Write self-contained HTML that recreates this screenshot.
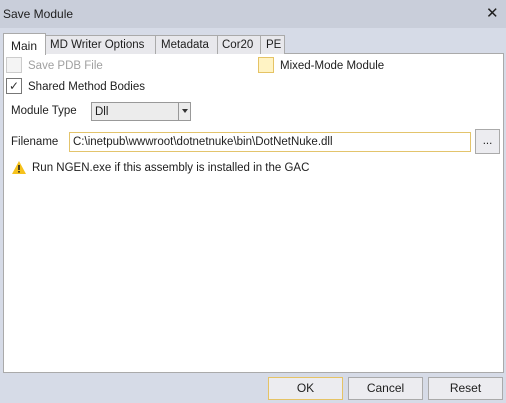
<!DOCTYPE html>
<html><head><style>
*{box-sizing:border-box;margin:0;padding:0}
body{width:506px;height:403px;background:#d6dbe7;font-family:"Liberation Sans",sans-serif;font-size:11.5px;color:#1e1e1e;position:relative;overflow:hidden}
.a{position:absolute}
.title{left:0;top:0;width:506px;height:28px;background:#c9ceda}
.tab{position:absolute;top:35px;height:19px;border:1px solid #aaa;border-bottom:none;background:#e8e8ec;padding:3px 0 0 5px;font-size:11.5px;white-space:nowrap}
.panel{left:3px;top:53px;width:501px;height:320px;background:#fff;border:1px solid #aaa}
.cb{position:absolute;width:16px;height:16px;border:1px solid #777;background:#fff}
.btn{position:absolute;top:377px;height:23px;width:75px;border:1px solid #aaa;background:#ececf0;text-align:center;line-height:21px;font-size:12px}
</style></head><body>
<div class="a title"></div>
<div class="a" style="left:3px;top:7px;font-size:12px">Save Module</div>
<div class="a" style="left:486px;top:4px;font-size:15px">✕</div>
<div class="a panel"></div>
<div class="tab" style="left:45px;width:111px;padding-left:4px">MD Writer Options</div>
<div class="tab" style="left:155px;width:63px">Metadata</div>
<div class="tab" style="left:217px;width:44px;padding-left:4px">Cor20</div>
<div class="tab" style="left:260px;width:25px;padding-left:5px">PE</div>
<div class="tab" style="left:3px;top:33px;height:22px;width:43px;background:#fff;padding:5px 0 0 7px;font-size:12px">Main</div>
<div class="cb" style="left:6px;top:57px;border-color:#ccc;background:#f4f4f4"></div>
<div class="a" style="left:28px;top:60px;color:#a0a0a0">Save PDB File</div>
<div class="cb" style="left:258px;top:57px;border-color:#e5c365;background:#fff3c4"></div>
<div class="a" style="left:280px;top:60px">Mixed-Mode Module</div>
<div class="cb" style="left:6px;top:78px;font-size:12px;line-height:14px;text-align:center;color:#333">✓</div>
<div class="a" style="left:28px;top:81px">Shared Method Bodies</div>
<div class="a" style="left:11px;top:105px">Module Type</div>
<div class="a" style="left:91px;top:102px;width:100px;height:19px;border:1px solid #999;background:#ececec;padding:3px 0 0 3px">Dll<div class="a" style="left:86px;top:0;width:1px;height:17px;background:#999"></div><div class="a" style="left:90px;top:6px;border:3px solid transparent;border-top:4px solid #333"></div></div>
<div class="a" style="left:11px;top:136px">Filename</div>
<div class="a" style="left:69px;top:132px;width:402px;height:20px;border:1px solid #e3c46c;padding:3px 0 0 3px">C:\inetpub\wwwroot\dotnetnuke\bin\DotNetNuke.dll</div>
<div class="a" style="left:475px;top:129px;width:25px;height:25px;border:1px solid #aaa;background:#ececf0;text-align:center;line-height:22px">...</div>
<svg class="a" style="left:11px;top:160px" width="16" height="15"><path d="M8 1L15 14H1Z" fill="#f6c21c"/><rect x="7.2" y="5" width="1.6" height="5" fill="#222"/><rect x="7.2" y="11" width="1.6" height="1.6" fill="#222"/></svg>
<div class="a" style="left:32px;top:162px">Run NGEN.exe if this assembly is installed in the GAC</div>
<div class="btn" style="left:268px;border-color:#e5c365">OK</div>
<div class="btn" style="left:348px">Cancel</div>
<div class="btn" style="left:428px">Reset</div>
</body></html>
